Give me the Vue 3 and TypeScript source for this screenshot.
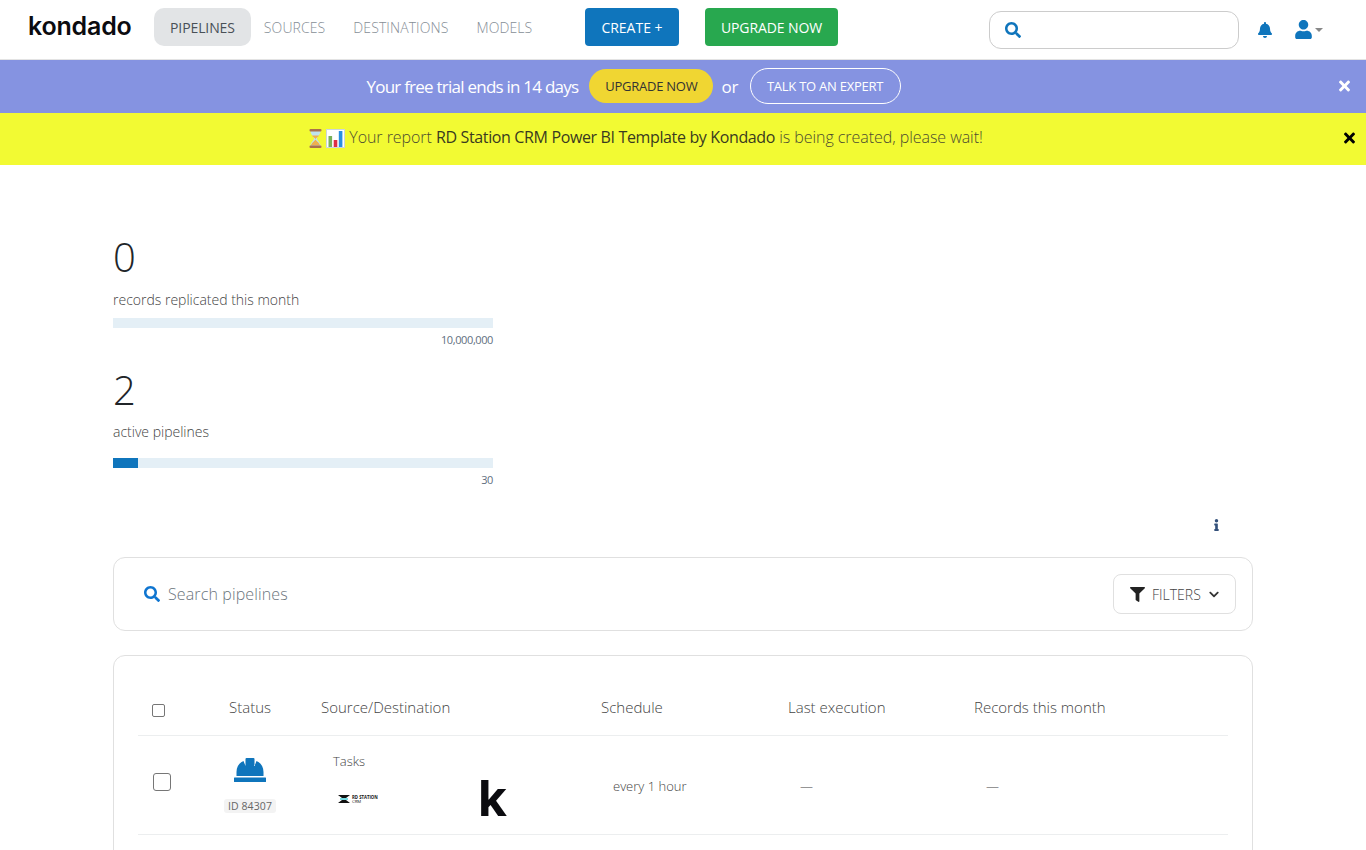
<template>
  <div class="page">
    <nav class="topbar">
      <a class="logo">kondado</a>
      <div class="nav-links">
        <a
          v-for="link in navLinks"
          :key="link"
          class="nav-link"
          :class="{ active: link === 'PIPELINES' }"
        >{{ link }}</a>
      </div>
      <button class="btn btn-create">CREATE +</button>
      <button class="btn btn-upgrade">UPGRADE NOW</button>
      <div class="top-search">
        <svg class="top-search-icon" viewBox="0 0 512 512"><path :d="icons.search" /></svg>
      </div>
      <svg class="bell" viewBox="0 0 448 512"><path :d="icons.bell" /></svg>
      <div class="user-menu">
        <svg class="user" viewBox="0 0 448 512"><path :d="icons.user" /></svg>
        <span class="caret"></span>
      </div>
    </nav>

    <div class="banner banner-trial">
      <span class="trial-text">Your free trial ends in 14 days</span>
      <button class="pill pill-yellow">UPGRADE NOW</button>
      <span class="trial-or">or</span>
      <button class="pill pill-outline">TALK TO AN EXPERT</button>
      <svg class="close close-white" viewBox="0 0 352 512"><path :d="icons.times" /></svg>
    </div>

    <div class="banner banner-report">
      <svg class="emoji" viewBox="0 0 19 19">
        <path d="M4.500 2h10c0 4-3.500 5.500-3.500 7.500s3.500 3.500 3.500 7.500h-10c0-4 3.500-5.500 3.500-7.500S4.500 6 4.500 2z" fill="#bfe3ee" />
        <path d="M5 16.500c.5-3 3-3.500 4.500-6 1.500 2.500 4 3 4.500 6zM6 6.500h7c-.8 1.500-2.500 2-3.500 3.500-1-1.500-2.700-2-3.500-3.500z" fill="#eeb04e" />
        <rect x="3.500" y="0" width="12" height="2.400" rx="1" fill="#a9714b" />
        <rect x="3.500" y="16.600" width="12" height="2.400" rx="1" fill="#a9714b" />
      </svg>
      <svg class="emoji" viewBox="0 0 19 19">
        <rect x=".5" y=".5" width="18" height="18" fill="#fff" stroke="#ccd6dd" stroke-width="1" />
        <rect x="2.500" y="7" width="3.600" height="11" fill="#78b159" />
        <rect x="7.700" y="11" width="3.600" height="7" fill="#dd2e44" />
        <rect x="12.800" y="2" width="3.600" height="16" fill="#2a8fe0" />
      </svg>
      <span class="report-text">Your report <strong>RD Station CRM Power BI Template by Kondado</strong> is being created, please wait!</span>
      <svg class="close close-black" viewBox="0 0 352 512"><path :d="icons.times" /></svg>
    </div>

    <main class="content">
      <section class="stat stat-records">
        <div class="stat-value">0</div>
        <div class="stat-label">records replicated this month</div>
        <div class="bar"><div class="bar-fill" :style="{ width: '0%' }"></div></div>
        <div class="bar-max">10,000,000</div>
      </section>
      <section class="stat stat-pipelines">
        <div class="stat-value">2</div>
        <div class="stat-label">active pipelines</div>
        <div class="bar"><div class="bar-fill" :style="{ width: (2 / 30) * 100 + '%' }"></div></div>
        <div class="bar-max">30</div>
      </section>

      <div class="info-row">
        <svg class="info" viewBox="0 0 192 512"><path :d="icons.info" /></svg>
      </div>

      <div class="card search-card">
        <svg class="search-icon" viewBox="0 0 512 512"><path :d="icons.search" /></svg>
        <span class="search-placeholder">Search pipelines</span>
        <button class="filters">
          <svg class="filter-icon" viewBox="0 0 512 512"><path :d="icons.filter" /></svg>
          <span>FILTERS</span>
          <svg class="chevron" viewBox="0 0 448 512"><path :d="icons.chevron" /></svg>
        </button>
      </div>

      <div class="card table-card">
        <div class="grid-row head-row">
          <div><span class="check check-small"></span></div>
          <div class="status-col">Status</div>
          <div>Source/Destination</div>
          <div>Schedule</div>
          <div>Last execution</div>
          <div>Records this month</div>
        </div>
        <div class="grid-row body-row">
          <div><span class="check"></span></div>
          <div class="status-col status-cell">
            <svg class="hat" viewBox="0 0 32 24">
              <path d="M2.500 18v-4C2.500 8.500 5.500 4.500 9.500 3l2 5V1a1 1 0 0 1 1-1h7a1 1 0 0 1 1 1v7l2-5c4 1.500 7 5.500 7 11v4zM.5 19.500h31a.5.5 0 0 1 .5.5v3.500a.5.5 0 0 1-.5.5H.5a.5.5 0 0 1-.5-.5V20a.5.5 0 0 1 .5-.5z" />
            </svg>
            <span class="pipeline-id">ID 84307</span>
          </div>
          <div class="source-cell">
            <div class="pipeline-name">Tasks</div>
            <div class="connectors">
              <div class="rd-logo">
                <svg class="rd-mark" viewBox="0 0 12 8">
                  <path d="M0 0h12L8 3H4zM0 8h12L8 5H4z" fill="#111" />
                  <path d="M2 3.400h8v1.200H2z" fill="#19c1ce" />
                </svg>
                <span class="rd-text"><b>RD STATION</b><br />CRM</span>
              </div>
              <span class="k-logo">k</span>
            </div>
          </div>
          <div class="cell-text">every 1 hour</div>
          <div class="cell-text">—</div>
          <div class="cell-text">—</div>
        </div>
      </div>
    </main>
  </div>
</template>

<script setup lang="ts">
const navLinks: string[] = ["PIPELINES", "SOURCES", "DESTINATIONS", "MODELS"];

const icons = {
  search:
    "M505 442.700L405.300 343c-4.500-4.500-10.600-7-17-7H372c27.600-35.300 44-79.700 44-128C416 93.100 322.900 0 208 0S0 93.100 0 208s93.100 208 208 208c48.300 0 92.700-16.400 128-44v16.300c0 6.400 2.500 12.500 7 17l99.700 99.700c9.400 9.400 24.600 9.400 33.900 0l28.300-28.300c9.400-9.400 9.400-24.600.1-34zM208 336c-70.700 0-128-57.200-128-128 0-70.700 57.200-128 128-128 70.700 0 128 57.200 128 128 0 70.700-57.200 128-128 128z",
  bell:
    "M224 512c35.320 0 63.970-28.650 63.970-64H160.030c0 35.350 28.650 64 63.970 64zm215.390-149.710c-19.320-20.760-55.470-51.990-55.470-154.290 0-77.700-54.480-139.900-127.940-155.160V32c0-17.670-14.320-32-31.980-32s-31.980 14.330-31.980 32v20.840C118.560 68.100 64.080 130.300 64.080 208c0 102.300-36.150 133.530-55.470 154.290-6 6.450-8.660 14.160-8.610 21.710.11 16.400 12.980 32 32.100 32h383.800c19.120 0 32-15.600 32.100-32 .05-7.550-2.610-15.270-8.610-21.710z",
  user:
    "M224 256c70.700 0 128-57.300 128-128S294.700 0 224 0 96 57.300 96 128s57.300 128 128 128zm89.600 32h-16.700c-22.200 10.200-46.900 16-72.900 16s-50.600-5.800-72.900-16h-16.700C60.200 288 0 348.200 0 422.400V464c0 26.500 21.500 48 48 48h352c26.500 0 48-21.500 48-48v-41.600c0-74.200-60.200-134.400-134.400-134.400z",
  times:
    "M242.720 256l100.070-100.070c12.280-12.280 12.280-32.190 0-44.480l-22.240-22.240c-12.280-12.280-32.190-12.280-44.480 0L176 189.280 75.930 89.210c-12.280-12.280-32.190-12.280-44.480 0L9.210 111.450c-12.280 12.280-12.280 32.190 0 44.480L109.280 256 9.210 356.070c-12.280 12.280-12.280 32.190 0 44.480l22.240 22.240c12.280 12.280 32.200 12.280 44.480 0L176 322.720l100.070 100.070c12.280 12.280 32.200 12.280 44.480 0l22.240-22.240c12.280-12.280 12.280-32.190 0-44.480L242.720 256z",
  filter:
    "M487.976 0H24.028C2.710 0-8.047 25.866 7.058 40.971L192 225.941V432c0 7.831 3.821 15.170 10.237 19.662l80 55.980C298.020 518.690 320 507.493 320 487.980V225.941l184.947-184.970C520.021 25.896 509.338 0 487.976 0z",
  chevron:
    "M207.029 381.476L12.686 187.132c-9.373-9.373-9.373-24.569 0-33.941l22.667-22.667c9.357-9.357 24.522-9.375 33.901-.04L224 284.505l154.745-154.021c9.379-9.335 24.544-9.317 33.901.04l22.667 22.667c9.373 9.373 9.373 24.569 0 33.941L240.971 381.476c-9.373 9.372-24.569 9.372-33.942 0z",
  info:
    "M20 424.229h20V279.771H20c-11.046 0-20-8.954-20-20V212c0-11.046 8.954-20 20-20h112c11.046 0 20 8.954 20 20v212.229h20c11.046 0 20 8.954 20 20V492c0 11.046-8.954 20-20 20H20c-11.046 0-20-8.954-20-20v-47.771c0-11.046 8.954-20 20-20zM96 0C56.235 0 24 32.235 24 72s32.235 72 72 72 72-32.235 72-72S135.764 0 96 0z",
};
</script>

<style>
html,
body {
  margin: 0;
  background: #fff;
  overflow: hidden;
}
</style>

<style scoped>
.page {
  height: 850px;
  overflow: hidden;
  font-family: "Open Sans", "Liberation Sans", sans-serif;
  font-weight: 300;
  color: #212529;
}

.topbar {
  display: flex;
  align-items: center;
  height: 59px;
  border-bottom: 1px solid #e3e3e3;
  padding-left: 28px;
}

.logo {
  width: 126px;
  font-family: "Inter", sans-serif;
  font-size: 25px;
  font-weight: 600;
  letter-spacing: -0.2px;
  color: #0b0b0f;
  margin-top: -7px;
}

.nav-links {
  display: flex;
  align-items: center;
  width: 431px;
  margin-top: -5px;
}

.nav-link {
  display: flex;
  align-items: center;
  height: 38px;
  padding: 0 14px;
  font-size: 14px;
  letter-spacing: 0.1px;
  color: #868e96;
}

.nav-link:first-child {
  margin-right: -1px;
}

.nav-link.active {
  padding: 0 16px;
  background: #e2e4e6;
  border-radius: 10px;
  color: #495057;
  font-weight: 400;
  letter-spacing: -0.1px;
}

.btn {
  height: 38px;
  margin-top: -5px;
  border: none;
  border-radius: 4px;
  color: #fff;
  font-family: inherit;
  font-size: 14px;
  font-weight: 400;
  padding: 0;
}

.btn-create {
  width: 94px;
  background: #0f75bc;
  margin-right: 26px;
}

.btn-upgrade {
  width: 133px;
  background: #28a84f;
  margin-right: 151px;
  letter-spacing: -0.1px;
}

.top-search {
  display: flex;
  align-items: center;
  box-sizing: border-box;
  width: 250px;
  height: 38px;
  border: 1px solid #ccc;
  border-radius: 12px;
  padding-left: 15px;
  margin-right: 19px;
}

.top-search-icon {
  width: 16px;
  height: 16px;
  fill: #0f75bc;
}

.bell {
  width: 14px;
  height: 16px;
  fill: #0f75bc;
  margin-right: 23px;
}

.user-menu {
  display: flex;
  align-items: center;
}

.user {
  width: 17px;
  height: 19px;
  fill: #0f75bc;
}

.caret {
  width: 0;
  height: 0;
  margin-left: 3px;
  border-left: 4px solid transparent;
  border-right: 4px solid transparent;
  border-top: 4px solid #888;
}

.banner {
  position: relative;
  display: flex;
  align-items: center;
  justify-content: center;
}

.banner-trial {
  height: 53px;
  background: #8593e1;
  color: #fff;
  padding-right: 99px;
  box-sizing: border-box;
}

.trial-text {
  font-size: 17px;
  font-weight: 400;
  letter-spacing: -0.76px;
  margin-right: 11px;
}

.pill {
  height: 34px;
  margin-top: -2px;
  border-radius: 18px;
  font-family: inherit;
  font-size: 13px;
  letter-spacing: -0.25px;
  padding: 0;
  font-weight: 400;
}

.pill-yellow {
  width: 124px;
  background: #f0d632;
  border: none;
  color: #333;
}

.trial-or {
  font-size: 17px;
  font-weight: 400;
  margin: 0 11px 0 8px;
}

.pill-outline {
  width: 151px;
  height: 36px;
  background: transparent;
  border: 1px solid #fff;
  color: #fff;
}

.close {
  position: absolute;
  height: 16px;
  width: 11px;
}

.close-white {
  right: 16px;
  top: 18px;
  fill: #fff;
}

.close-black {
  right: 11px;
  top: 17px;
  fill: #000;
}

.banner-report {
  height: 52px;
  background: #f2fa33;
  gap: 1px;
  padding-right: 77px;
  padding-bottom: 4px;
  box-sizing: border-box;
}

.emoji {
  width: 19px;
  height: 19px;
  margin-top: 3px;
}

.report-text {
  margin-left: 3px;
  font-size: 16px;
  letter-spacing: -0.05px;
  color: #4c4c30;
}

.report-text strong {
  font-weight: 500;
  letter-spacing: -0.36px;
  color: #3a3a20;
}

.content {
  width: 1140px;
  margin: 0 auto;
  padding-top: 66px;
}

.stat {
  width: 380px;
}

.stat-value {
  font-size: 40px;
  line-height: 52px;
}

.stat-label {
  margin-top: 7px;
  font-size: 14px;
  line-height: 20px;
  color: #444;
}

.bar {
  height: 10px;
  margin-top: 8px;
  background: #e4eff6;
}

.stat-pipelines .bar {
  margin-top: 16px;
}

.bar-fill {
  height: 100%;
  background: #0f75bc;
}

.bar-max {
  margin-top: 3px;
  text-align: right;
  font-size: 11px;
  font-weight: 400;
  letter-spacing: -0.4px;
  line-height: 17px;
  color: #5f6f80;
}

.stat-pipelines {
  margin-top: 16px;
}

.stat-pipelines .stat-label {
  margin-top: 6px;
}

.info-row {
  display: flex;
  justify-content: flex-end;
  height: 59px;
  padding: 31px 34px 0 0;
  box-sizing: border-box;
}

.info {
  width: 5px;
  height: 12px;
  fill: #33507a;
}

.card {
  box-sizing: border-box;
  border: 1px solid #e0e0e0;
  border-radius: 12px;
  background: #fff;
}

.search-card {
  display: flex;
  align-items: center;
  height: 74px;
  padding: 0 16px 0 30px;
  margin-top: 10px;
}

.search-icon {
  width: 16px;
  height: 16px;
  fill: #0f75d0;
  margin-right: 8px;
}

.search-placeholder {
  flex: 1;
  font-size: 16px;
  letter-spacing: 0.12px;
  color: #6c757d;
}

.filters {
  display: flex;
  align-items: center;
  box-sizing: border-box;
  width: 123px;
  height: 40px;
  border: 1px solid #e0e0e0;
  border-radius: 8px;
  background: #fff;
  padding: 0 0 0 16px;
  font-family: inherit;
  font-size: 14px;
  font-weight: 300;
  color: #444;
}

.filter-icon {
  width: 15px;
  height: 15px;
  fill: #222;
  margin-right: 7px;
}

.chevron {
  width: 10px;
  height: 11px;
  fill: #333;
  margin-left: 8px;
}

.table-card {
  height: 300px;
  margin-top: 24px;
  padding: 0 24px;
}

.grid-row {
  display: grid;
  grid-template-columns: 50px 124px 280px 187px 186px 1fr;
  border-bottom: 1px solid #eceeef;
}

.head-row {
  height: 80px;
  padding-top: 30px;
  box-sizing: border-box;
  font-size: 15px;
  line-height: 42px;
  color: #444;
}

.head-row > div:not(:first-child):not(.status-col) {
  padding-left: 9px;
}

.head-row > div:first-child {
  padding-left: 14px;
}

.status-col {
  text-align: center;
}

.check {
  display: block;
  box-sizing: border-box;
  width: 18px;
  height: 18px;
  border: 1px solid #767676;
  border-radius: 3px;
  margin: 37px 0 0 15px;
}

.check-small {
  width: 13px;
  height: 13px;
  border-radius: 2px;
  margin: 18px 0 0;
}

.body-row {
  height: 98px;
  font-size: 13px;
  color: #444;
}

.status-cell {
  display: flex;
  flex-direction: column;
  align-items: center;
  padding-top: 22px;
}

.hat {
  width: 32px;
  height: 24px;
  fill: #0f75bc;
}

.pipeline-id {
  margin-top: 17px;
  padding: 0 4px;
  border-radius: 3px;
  background: #f3f3f3;
  font-size: 10.500px;
  font-weight: 400;
  letter-spacing: 0.1px;
  line-height: 14px;
  color: #666;
}

.source-cell {
  padding: 16px 0 0 21px;
}

.pipeline-name {
  line-height: 18px;
}

.connectors {
  display: flex;
  align-items: center;
  margin-top: 8px;
}

.rd-logo {
  display: flex;
  align-items: center;
  width: 147px;
  padding-left: 5px;
  box-sizing: border-box;
  margin-top: 2px;
}

.rd-mark {
  width: 12px;
  height: 8px;
  margin-right: 2px;
}

.rd-text {
  font-size: 4.300px;
  line-height: 4px;
  font-weight: 400;
  color: #111;
  white-space: nowrap;
}

.k-logo {
  margin-left: -2px;
  margin-top: 1px;
  font-family: "Inter", sans-serif;
  font-size: 50px;
  font-weight: 700;
  line-height: 38px;
  height: 38px;
  color: #0b0b0f;
}

.cell-text {
  padding: 41px 0 0 21px;
  line-height: 18px;
}
</style>
